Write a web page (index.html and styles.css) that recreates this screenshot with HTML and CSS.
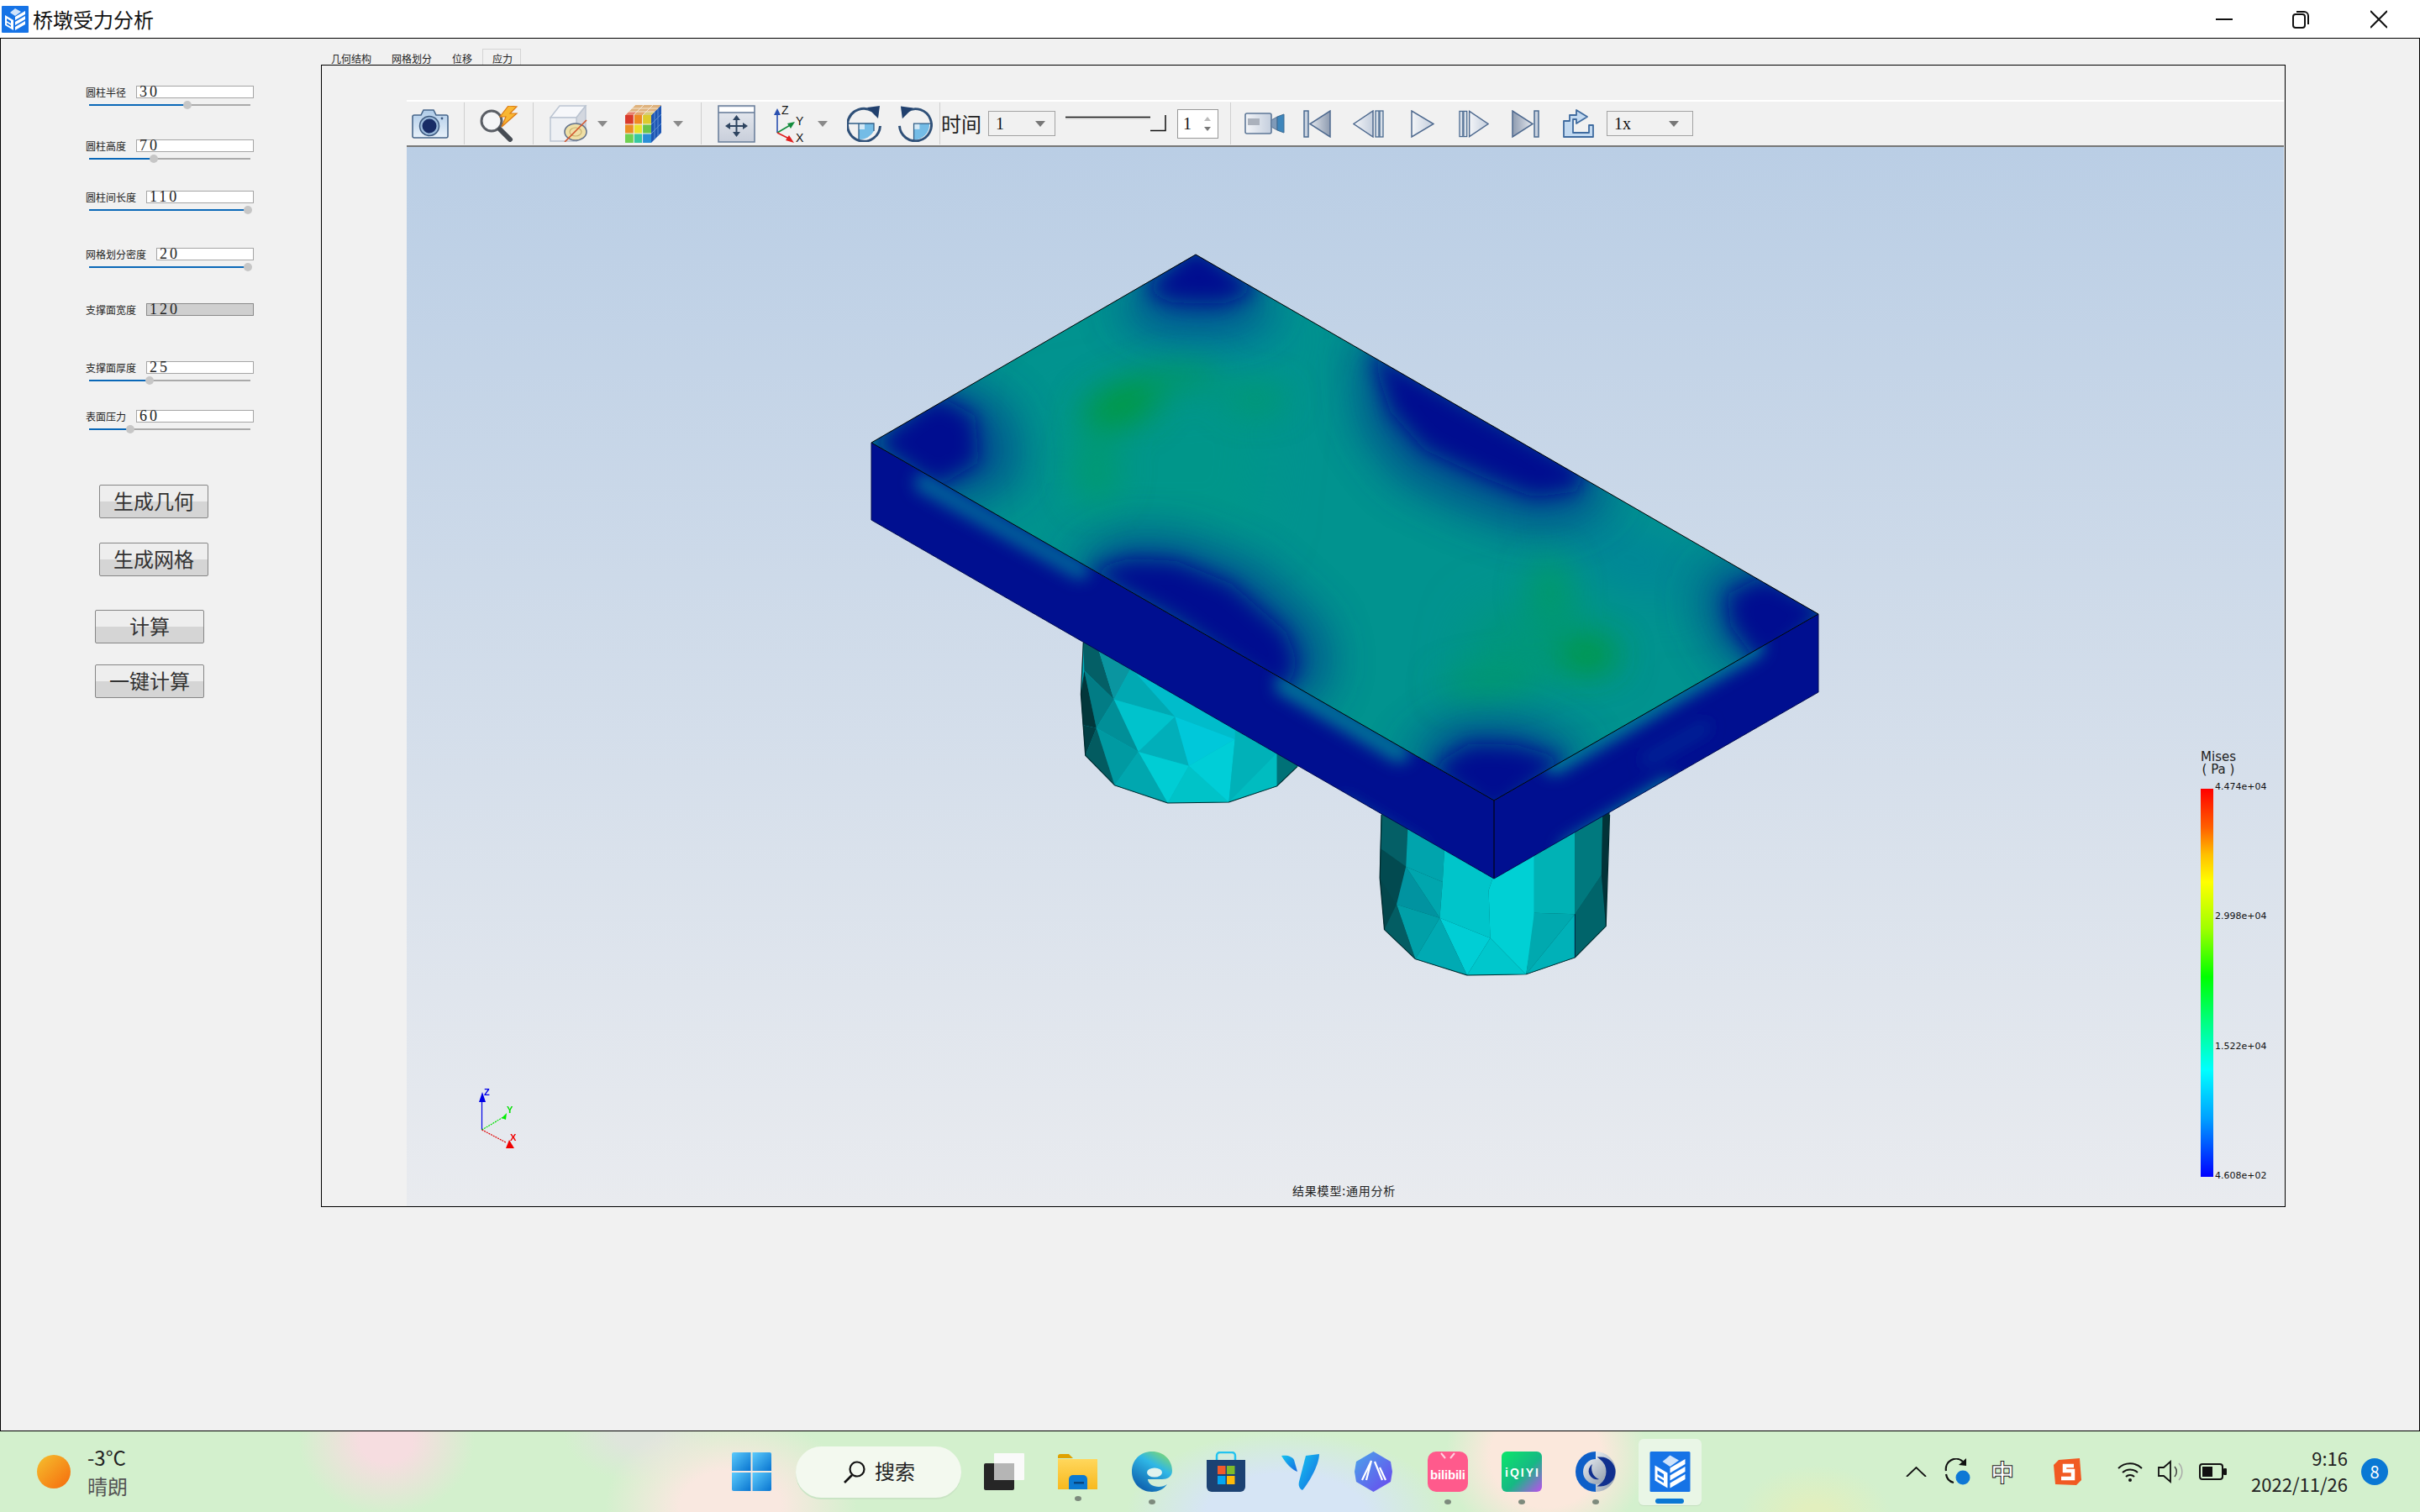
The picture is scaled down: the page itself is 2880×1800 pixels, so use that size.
FILE: index.html
```html
<!DOCTYPE html>
<html lang="zh">
<head>
<meta charset="utf-8">
<title>桥墩受力分析</title>
<link rel="stylesheet" href="styles.css">
</head>
<body>
<svg class="defs" width="0" height="0">
  <defs>
    <symbol id="appicon" viewBox="0 0 32 32">
      <rect width="32" height="32" rx="1" fill="#1673e6"/>
      <polygon points="16,3 23,7 16,12 10,8" fill="#cfe3fb"/>
      <polygon points="4,11 14,17 14,29 4,23" fill="#fff"/>
      <polygon points="6,15 11,18 11,21 6,18" fill="#1673e6"/>
      <polygon points="6,20 11,23 11,25 6,22" fill="#1673e6"/>
      <polygon points="16,13 28,6 28,10 16,17" fill="#fff"/>
      <polygon points="16,19 28,12 28,16 16,23" fill="#fff"/>
      <polygon points="16,25 28,18 28,22 16,29" fill="#fff"/>
    </symbol>
    <linearGradient id="glass" x1="0" y1="0" x2="0" y2="1"><stop offset="0" stop-color="#aecbe8"/><stop offset="1" stop-color="#e8f1fa"/></linearGradient>
    <linearGradient id="steel" x1="0" y1="0" x2="1" y2="0"><stop offset="0" stop-color="#e4e8ee"/><stop offset="1" stop-color="#8e9bb0"/></linearGradient>
    <linearGradient id="steelr" x1="1" y1="0" x2="0" y2="0"><stop offset="0" stop-color="#e4e8ee"/><stop offset="1" stop-color="#8e9bb0"/></linearGradient>
    <linearGradient id="pale" x1="0" y1="0" x2="1" y2="0"><stop offset="0" stop-color="#f3f5f8"/><stop offset="1" stop-color="#c4cedd"/></linearGradient>
    <linearGradient id="fitbg" x1="0" y1="0" x2="0" y2="1"><stop offset="0" stop-color="#e8ebf1"/><stop offset="1" stop-color="#c8ceda"/></linearGradient>
    <linearGradient id="winb" x1="0" y1="0" x2="1" y2="1"><stop offset="0" stop-color="#5ccbfc"/><stop offset="1" stop-color="#0874d0"/></linearGradient>
    <linearGradient id="sun" x1="0" y1="0" x2="1" y2="1"><stop offset="0" stop-color="#f6c02e"/><stop offset="1" stop-color="#f56a0c"/></linearGradient>
    <linearGradient id="edgeb" x1="0.8" y1="0" x2="0.2" y2="1"><stop offset="0" stop-color="#7fd870"/><stop offset="0.35" stop-color="#2fb7e6"/><stop offset="1" stop-color="#0b58a8"/></linearGradient>
    <linearGradient id="vbl" x1="0" y1="0" x2="1" y2="1"><stop offset="0" stop-color="#16c4f0"/><stop offset="1" stop-color="#1468e0"/></linearGradient>
    <linearGradient id="hexg" x1="0" y1="0" x2="1" y2="1"><stop offset="0" stop-color="#4aa6ea"/><stop offset="1" stop-color="#6b45ee"/></linearGradient>
    <linearGradient id="iq" x1="0" y1="0" x2="1" y2="1"><stop offset="0" stop-color="#0ce66a"/><stop offset="0.55" stop-color="#16b884"/><stop offset="1" stop-color="#c04cf0"/></linearGradient>
    <linearGradient id="folder" x1="0" y1="0" x2="0" y2="1"><stop offset="0" stop-color="#ffd75c"/><stop offset="1" stop-color="#f8b91e"/></linearGradient>
    <linearGradient id="silver" x1="0" y1="0" x2="1" y2="1"><stop offset="0" stop-color="#e8ecf0"/><stop offset="1" stop-color="#8a97a8"/></linearGradient>
  </defs>
</svg>

<div class="app">
  <header class="titlebar">
    <svg class="title-icon" width="32" height="32"><use href="#appicon"/></svg>
    <span class="title-text">桥墩受力分析</span>
    <div class="winctl">
      <svg class="ctl-min" width="20" height="20" viewBox="0 0 20 20"><path d="M0 10H20" stroke="#111" stroke-width="2"/></svg>
      <svg class="ctl-max" width="20" height="22" viewBox="0 0 20 22"><rect x="1" y="5" width="14" height="16" rx="3" fill="none" stroke="#111" stroke-width="2"/><path d="M5 2h9a5 5 0 015 5v10" fill="none" stroke="#111" stroke-width="2"/></svg>
      <svg class="ctl-close" width="20" height="22" viewBox="0 0 20 22"><path d="M0 1L20 21M20 1L0 21" stroke="#111" stroke-width="2"/></svg>
    </div>
  </header>

  <main class="window">
    <aside class="sidebar">
      <div class="param p1">
        <div class="field"><span class="flabel">圆柱半径</span><span class="finput">30</span></div>
        <div class="slider"><div class="track"><div class="fill" style="width:117px"></div></div><span class="thumb" style="left:112px"></span></div>
      </div>
      <div class="param p2">
        <div class="field"><span class="flabel">圆柱高度</span><span class="finput">70</span></div>
        <div class="slider"><div class="track"><div class="fill" style="width:77px"></div></div><span class="thumb" style="left:72px"></span></div>
      </div>
      <div class="param p3">
        <div class="field"><span class="flabel">圆柱间长度</span><span class="finput">110</span></div>
        <div class="slider"><div class="track"><div class="fill" style="width:189px"></div></div><span class="thumb" style="left:184px"></span></div>
      </div>
      <div class="param p4">
        <div class="field"><span class="flabel">网格划分密度</span><span class="finput">20</span></div>
        <div class="slider"><div class="track"><div class="fill" style="width:189px"></div></div><span class="thumb" style="left:184px"></span></div>
      </div>
      <div class="param p5">
        <div class="field"><span class="flabel">支撑面宽度</span><span class="finput disabled">120</span></div>
      </div>
      <div class="param p6">
        <div class="field"><span class="flabel">支撑面厚度</span><span class="finput">25</span></div>
        <div class="slider"><div class="track"><div class="fill" style="width:72px"></div></div><span class="thumb" style="left:67px"></span></div>
      </div>
      <div class="param p7">
        <div class="field"><span class="flabel">表面压力</span><span class="finput">60</span></div>
        <div class="slider"><div class="track"><div class="fill" style="width:49px"></div></div><span class="thumb" style="left:44px"></span></div>
      </div>
      <div class="btn b1">生成几何</div>
      <div class="btn b2">生成网格</div>
      <div class="btn b3">计算</div>
      <div class="btn b4">一键计算</div>
    </aside>

    <section class="workspace">
      <nav class="tabs">
        <span class="tab">几何结构</span>
        <span class="tab">网格划分</span>
        <span class="tab">位移</span>
        <span class="tab active">应力</span>
      </nav>
      <div class="pane">
        <div class="toolbar">
          <svg class="t-cam" width="44" height="37" viewBox="0 0 44 37">
            <path d="M3 8h8l3-6h12l3 6h12a2 2 0 012 2v23a2 2 0 01-2 2H3a2 2 0 01-2-2V10a2 2 0 012-2z" fill="url(#glass)" stroke="#47668a" stroke-width="1.6"/>
            <circle cx="21" cy="21" r="11.5" fill="#9dbcdc" stroke="#3d5a80" stroke-width="1.5"/>
            <circle cx="21" cy="21" r="8.5" fill="#182c66"/>
            <circle cx="36" cy="12" r="1.4" fill="#3d5a80"/>
          </svg>
          <span class="sep s1"></span>
          <svg class="t-mag" width="46" height="43" viewBox="0 0 46 43">
            <circle cx="14" cy="18" r="12" fill="#f5f6f8" stroke="#5b5f66" stroke-width="3"/>
            <path d="M24 28L36 40" stroke="#474c54" stroke-width="6" stroke-linecap="round"/>
            <polygon points="34,0 24,13 31,13 26,25 44,9 36,9 44,1" fill="#f9b733" stroke="#dc7a12" stroke-width="1.2"/>
          </svg>
          <span class="sep s2"></span>
          <svg class="t-cube" width="46" height="44" viewBox="0 0 46 44">
            <polygon points="1,15 12,1 43,1 32,15" fill="#f6f7fa" stroke="#bcc5d2" stroke-width="1.5"/>
            <polygon points="32,15 43,1 43,30 32,43" fill="#d3d7df" stroke="#bcc5d2" stroke-width="1.5"/>
            <rect x="1" y="15" width="31" height="28" fill="#eef0f4" stroke="#bcc5d2" stroke-width="1.5"/>
            <ellipse cx="31" cy="32" rx="13" ry="10" fill="#efdfa6" stroke="#65748c" stroke-width="1.6"/>
            <ellipse cx="31" cy="32" rx="7" ry="5" fill="none" stroke="#c9b26e" stroke-width="1.2"/>
            <path d="M18 44L44 18" stroke="#d2552c" stroke-width="1.6"/>
          </svg>
          <span class="drop d1"></span>
          <svg class="t-rubik" width="43" height="45" viewBox="0 0 43 45">
            <polygon points="31,12 43,0 43,33 31,45" fill="#1d56b4"/>
            <path d="M35 8V41M39 4V37M31 23L43 11M31 34L43 22" stroke="#5f8fd0" stroke-width="1"/>
            <polygon points="0,12 12,0 43,0 31,12" fill="#dfb27c"/>
            <polygon points="0,12 4,8 14,8 10,12" fill="#e8836e"/>
            <polygon points="10,12 14,8 25,8 21,12" fill="#e4a66c"/>
            <polygon points="21,12 25,8 35,8 31,12" fill="#d6cc78"/>
            <path d="M4 8H35M8 4H39M12 0L0 12M22 0L10 12M33 0L21 12" stroke="#f3e6d4" stroke-width="1"/>
            <rect y="12" width="10.3" height="11" fill="#d93a2b"/><rect x="10.3" y="12" width="10.3" height="11" fill="#ef8a21"/><rect x="20.6" y="12" width="10.4" height="11" fill="#dccb2d"/>
            <rect y="23" width="10.3" height="11" fill="#eb8f24"/><rect x="10.3" y="23" width="10.3" height="11" fill="#e9e22a"/><rect x="20.6" y="23" width="10.4" height="11" fill="#68c44a"/>
            <rect y="34" width="10.3" height="11" fill="#6ed152"/><rect x="10.3" y="34" width="10.3" height="11" fill="#37c9a0"/><rect x="20.6" y="34" width="10.4" height="11" fill="#2a8fd8"/>
            <path d="M10.3 12V45M20.6 12V45M0 23H31M0 34H31" stroke="#f2f2f2" stroke-width="1"/>
          </svg>
          <span class="drop d2"></span>
          <span class="sep s3"></span>
          <svg class="t-fit" width="45" height="45" viewBox="0 0 45 45">
            <rect x="1" y="1" width="43" height="43" fill="url(#fitbg)" stroke="#667b98" stroke-width="1.5"/>
            <rect x="2" y="3" width="41" height="5" fill="#fff"/>
            <path d="M1 9H44" stroke="#667b98" stroke-width="1.5"/>
            <path d="M22.5 14V36M11 25H34" stroke="#2e4460" stroke-width="2"/>
            <polygon points="22.5,12 18,18 27,18" fill="#2e4460"/><polygon points="22.5,38 18,32 27,32" fill="#2e4460"/>
            <polygon points="9,25 15,21 15,29" fill="#2e4460"/><polygon points="36,25 30,21 30,29" fill="#2e4460"/>
          </svg>
          <svg class="t-axes" width="37" height="47" viewBox="0 0 37 47">
            <path d="M4 34V10" stroke="#2a50b0" stroke-width="1.6"/><polygon points="4,5 0,13 8,13" fill="#2a50b0"/>
            <path d="M4 34L21 24" stroke="#128c3c" stroke-width="1.6"/><polygon points="25,21 16,23 20,29" fill="#128c3c"/>
            <path d="M4 34L20 42" stroke="#e02020" stroke-width="1.6"/><polygon points="24,46 14,43 18,37" fill="#e02020"/>
            <text x="9" y="12" class="axlabel">Z</text><text x="26" y="25" class="axlabel">Y</text><text x="26" y="45" class="axlabel">X</text>
          </svg>
          <span class="drop d3"></span>
          <svg class="t-rot" width="42" height="43" viewBox="0 0 42 43">
            <path d="M14 21H32V30A19 19 0 0 1 14 40Z" fill="#74bce6"/>
            <rect x="14" y="21" width="7" height="7" fill="#d4e9f6"/>
            <path d="M1 21H32V30M14 21V40" fill="none" stroke="#2f5d86" stroke-width="1.3"/>
            <path d="M30 6A19.500 19.500 0 1 0 39.500 24" fill="none" stroke="#2f5078" stroke-width="3"/>
            <polygon points="24,2 39,0 37,15" fill="#21406e"/>
          </svg>
          <svg class="t-rot2" width="41" height="43" viewBox="0 0 42 43">
            <path d="M19 21H38A19 19 0 0 1 19 41Z" fill="#74bce6"/>
            <rect x="19" y="21" width="7" height="7" fill="#d4e9f6"/>
            <path d="M40 21H19V41" fill="none" stroke="#2f5d86" stroke-width="1.3"/>
            <path d="M11 6A19.500 19.500 0 1 1 1.500 24" fill="none" stroke="#2f5078" stroke-width="3"/>
            <polygon points="18,2 3,0 5,15" fill="#21406e"/>
          </svg>
          <span class="sep s4"></span>
          <span class="time-label">时间</span>
          <div class="combo c-time"><span>1</span><i class="combo-arrow"></i></div>
          <svg class="t-range" width="120" height="20" viewBox="0 0 120 20"><path d="M0 2.500H101" stroke="#111" stroke-width="1.500"/><path d="M0 4H101" stroke="#bbb" stroke-width="1"/><path d="M101 18.500H119V0" fill="none" stroke="#111" stroke-width="1.500"/></svg>
          <div class="spin"><span>1</span><div class="spin-arrows"><i class="up"></i><i class="down"></i></div></div>
          <span class="sep s5"></span>
          <svg class="t-video" width="48" height="26" viewBox="0 0 48 26">
            <rect x="1" y="1" width="31" height="24" rx="2" fill="url(#pale)" stroke="#5d7797" stroke-width="1.600"/>
            <rect x="4" y="7" width="14" height="8" fill="#aab1bc"/>
            <polygon points="32,9 39,5 39,21 32,17" fill="#7f9ab8" stroke="#5d7797"/>
            <polygon points="39,5 47,2 47,24 39,21" fill="#3e86bb" stroke="#3c6a92"/>
          </svg>
          <svg class="t-first" width="33" height="33" viewBox="0 0 33 33"><rect x="1" y="1" width="5" height="31" fill="#c9d2df" stroke="#4a6a90" stroke-width="1.500"/><polygon points="32,1 32,32 8,16.500" fill="url(#steel)" stroke="#4f6a8f" stroke-width="1.500"/></svg>
          <svg class="t-prev" width="37" height="33" viewBox="0 0 37 33"><polygon points="24,1 24,32 1,16.500" fill="url(#pale)" stroke="#4f6a8f" stroke-width="1.500"/><rect x="27" y="1" width="4" height="31" fill="#d8dfe8" stroke="#4a6a90" stroke-width="1.300"/><rect x="32" y="1" width="4" height="31" fill="#d8dfe8" stroke="#4a6a90" stroke-width="1.300"/></svg>
          <svg class="t-play" width="28" height="33" viewBox="0 0 28 33"><polygon points="1,1 1,32 27,16.500" fill="url(#pale)" stroke="#4f6a8f" stroke-width="1.500"/></svg>
          <svg class="t-next" width="36" height="33" viewBox="0 0 37 33"><rect x="1" y="1" width="4" height="31" fill="#d8dfe8" stroke="#4a6a90" stroke-width="1.300"/><rect x="6" y="1" width="4" height="31" fill="#d8dfe8" stroke="#4a6a90" stroke-width="1.300"/><polygon points="13,1 13,32 36,16.500" fill="url(#pale)" stroke="#4f6a8f" stroke-width="1.500"/></svg>
          <svg class="t-last" width="33" height="33" viewBox="0 0 33 33"><polygon points="1,1 1,32 25,16.500" fill="url(#steelr)" stroke="#4f6a8f" stroke-width="1.500"/><rect x="27" y="1" width="5" height="31" fill="#c9d2df" stroke="#4a6a90" stroke-width="1.500"/></svg>
          <svg class="t-export" width="38" height="34" viewBox="0 0 38 34"><path d="M2 14H9V7H17V1L30 9L17 17V12H13V28H32V19H37V33H2Z" fill="#c2d9f0" stroke="#3f6b9f" stroke-width="1.800" stroke-linejoin="round"/></svg>
          <div class="combo c-speed"><span>1x</span><i class="combo-arrow"></i></div>
        </div>

        <div class="viewport">
          <svg class="model" width="2234" height="1261" viewBox="484 175 2234 1261">
            <defs>
              <clipPath id="clipTop"><polygon points="1423,303 2164,731 1778,953 1037,527"/></clipPath>
              <clipPath id="clipLeft"><polygon points="1037,527 1778,953 1778,1046 1037,619"/></clipPath>
              <clipPath id="clipRight"><polygon points="1778,953 2164,731 2164,824 1778,1046"/></clipPath>
              <filter id="b30" x="-40%" y="-40%" width="180%" height="180%"><feGaussianBlur stdDeviation="30"/></filter>
              <filter id="b26" x="-40%" y="-40%" width="180%" height="180%"><feGaussianBlur stdDeviation="26"/></filter>
              <filter id="b13" x="-40%" y="-40%" width="180%" height="180%"><feGaussianBlur stdDeviation="13"/></filter>
              <filter id="b20" x="-60%" y="-60%" width="220%" height="220%"><feGaussianBlur stdDeviation="20"/></filter>
              <filter id="b9" x="-40%" y="-40%" width="180%" height="180%"><feGaussianBlur stdDeviation="9"/></filter>
            </defs>

            <!-- left pier -->
            <g transform="translate(1220 740) scale(.4847 .3333)">
              <polygon fill="#00b4c2" points="143,50 300,150 690,470 668,518 618,588 500,645 350,648 220,585 148,478 137,260"/>
              <polygon fill="#045f66" points="143,55 178,90 218,278 145,175"/>
              <polygon fill="#0a95a0" points="178,90 260,165 218,278"/>
              <polygon fill="#00a9b3" points="260,165 368,340 218,278"/>
              <polygon fill="#00bccb" points="260,165 300,190 530,380 515,420 368,340"/>
              <polygon fill="#00c3cc" points="218,278 368,340 278,465"/>
              <polygon fill="#027c85" points="145,175 218,278 175,380"/>
              <polygon fill="#02373b" points="145,175 137,260 142,370 175,380"/>
              <polygon fill="#018f98" points="218,278 278,465 175,380"/>
              <polygon fill="#01afba" points="368,340 402,515 278,465"/>
              <polygon fill="#00c8da" points="368,340 515,420 402,515"/>
              <polygon fill="#009aa2" points="175,380 278,465 220,585"/>
              <polygon fill="#035b60" points="175,380 148,478 220,585"/>
              <polygon fill="#023f44" points="142,370 175,380 148,478"/>
              <polygon fill="#00cdd4" points="278,465 402,515 350,648"/>
              <polygon fill="#00a7af" points="278,465 350,648 220,585"/>
              <polygon fill="#00c3c8" points="402,515 500,645 350,648"/>
              <polygon fill="#00ced7" points="402,515 515,420 500,645"/>
              <polygon fill="#00b1b8" points="515,380 618,460 618,470 500,645 515,420"/>
              <polygon fill="#00bcc0" points="618,470 618,588 500,645"/>
              <polygon fill="#007177" points="618,460 690,510 668,518 618,588"/>
              <polyline class="pier-edge" points="143,75 137,260 148,478 220,585 350,648 500,645 618,588 668,518"/>
            </g>

            <!-- right pier -->
            <g transform="translate(1220 740) scale(.4847 .3333)">
              <polygon fill="#03555b" points="875,670 1152,880 1435,670 1430,880 1426,1088 1350,1200 1230,1260 1085,1263 958,1205 882,1100 871,915"/>
              <polygon fill="#045f66" points="875,670 940,725 935,875 872,810"/>
              <polygon fill="#024a50" points="872,810 935,875 912,1010 871,915"/>
              <polygon fill="#03474c" points="871,915 912,1010 882,1100"/>
              <polygon fill="#00a4ad" points="940,725 1030,800 1025,930 935,875"/>
              <polygon fill="#0193a0" points="935,875 1018,1058 912,1010"/>
              <polygon fill="#00a6ae" points="935,875 1025,930 1018,1058"/>
              <polygon fill="#00c5ca" points="1030,800 1152,900 1138,960 1142,1130 1018,1058 1025,930"/>
              <polygon fill="#00d0d4" points="1152,900 1250,820 1250,1080 1230,1260 1142,1130 1138,960"/>
              <polygon fill="#00ced5" points="1018,1058 1142,1130 1085,1263"/>
              <polygon fill="#00a0a8" points="912,1010 1018,1058 958,1205"/>
              <polygon fill="#035d63" points="912,1010 958,1205 882,1100"/>
              <polygon fill="#00aab3" points="1018,1058 1085,1263 958,1205"/>
              <polygon fill="#00c7cc" points="1142,1130 1230,1260 1085,1263"/>
              <polygon fill="#00b2b5" points="1250,820 1350,737 1350,1045 1250,1040"/>
              <polygon fill="#00a9af" points="1250,1040 1350,1045 1230,1260"/>
              <polygon fill="#00b1b8" points="1350,1045 1350,1200 1230,1260"/>
              <polygon fill="#00797e" points="1350,737 1418,682 1415,905 1350,1045"/>
              <polygon fill="#00646a" points="1350,1045 1415,905 1426,1088 1350,1200"/>
              <polygon fill="#023338" points="1418,682 1435,670 1430,880 1426,1088 1415,905"/>
              <polyline class="pier-edge" points="875,690 871,915 882,1100 958,1205 1085,1263 1230,1260 1350,1200 1426,1088 1435,690"/>
              <path d="M1350 1045V1200" stroke="#013" stroke-width="2"/>
            </g>

            <!-- slab: side faces -->
            <polygon points="1037,527 1778,953 1778,1046 1037,619" fill="#000f90"/>
            <polygon points="1778,953 2164,731 2164,824 1778,1046" fill="#000f90"/>
            <g clip-path="url(#clipLeft)">
              <g filter="url(#b9)" fill="none" stroke-linecap="round">
                <path d="M1100 575L1285 678" stroke="#00609a" stroke-width="24"/>
                <path d="M1530 815L1665 895" stroke="#007098" stroke-width="26"/>
                <path d="M1600 955L1690 1010" stroke="#00509c" stroke-width="12"/>
              </g>
            </g>
            <g clip-path="url(#clipRight)">
              <g filter="url(#b9)" fill="none" stroke-linecap="round">
                <path d="M1850 908L2085 770" stroke="#007898" stroke-width="28"/>
                <path d="M1870 1012L1985 940" stroke="#007898" stroke-width="28"/>
                <path d="M1960 905L2030 865" stroke="#00309a" stroke-width="10"/>
              </g>
            </g>

            <!-- slab: top face -->
            <polygon points="1423,303 2164,731 1778,953 1037,527" fill="#01938f"/>
            <g clip-path="url(#clipTop)">
              <g filter="url(#b30)">
                <polygon fill="#01968a" points="1250,480 1520,450 1500,640 1280,640"/>
                <polygon fill="#008c9c" points="1350,340 1560,400 1400,440"/>
                <polygon fill="#008598" points="1840,600 2020,650 2000,720 1880,680"/>
                <polygon fill="#01977a" points="1760,730 1900,710 1910,790 1740,820"/>
              </g>
              <g filter="url(#b26)" fill="#00408f" opacity=".75">
                <polygon points="1325,375 1423,280 1525,375 1470,398 1385,398"/>
                <polygon points="1030,527 1130,445 1205,490 1215,570 1130,610"/>
                <polygon points="1610,400 1925,575 1900,615 1830,635 1750,610 1665,570 1620,510"/>
                <polygon points="1270,670 1335,635 1405,638 1495,672 1575,745 1585,800 1550,850 1400,750"/>
                <polygon points="1670,900 1735,852 1815,855 1895,895 1778,975"/>
                <polygon points="2180,725 2075,655 2020,695 2030,750 2075,810"/>
              </g>
              <g filter="url(#b13)" fill="#000f90">
                <polygon points="1360,345 1423,290 1500,345 1455,362 1395,360"/>
                <polygon points="1037,527 1115,470 1160,495 1165,550 1115,580"/>
                <polygon points="1630,415 1890,560 1875,585 1825,592 1765,568 1695,535 1655,490"/>
                <polygon points="1290,680 1345,665 1400,668 1465,695 1530,752 1545,790 1525,830 1400,740"/>
                <polygon points="1700,915 1750,885 1805,887 1865,905 1778,975"/>
                <polygon points="2180,725 2100,685 2055,708 2060,745 2100,800"/>
              </g>
              <g filter="url(#b20)">
                <ellipse cx="1335" cy="482" rx="50" ry="24" fill="#009a3c" transform="rotate(-24 1335 482)"/>
                <ellipse cx="1410" cy="448" rx="45" ry="12" fill="#019a58"/>
                <ellipse cx="1495" cy="475" rx="36" ry="13" fill="#019a68"/>
                <ellipse cx="1305" cy="560" rx="26" ry="38" fill="#019a70"/>
                <ellipse cx="1890" cy="780" rx="36" ry="18" fill="#009a34"/>
                <ellipse cx="1845" cy="705" rx="22" ry="40" fill="#019a68"/>
                <ellipse cx="1775" cy="810" rx="62" ry="13" fill="#019a68" transform="rotate(-8 1775 810)"/>
              </g>
            </g>

            <polygon class="slab-edge" points="1423,303 2164,731 1778,953 1037,527"/>
            <path class="slab-line" d="M1778 953V1046"/>
            <polyline class="slab-out" points="1037,527 1037,619 1778,1046 2164,824 2164,731"/>

            <!-- triad -->
            <path d="M573.500 1345V1308" stroke="#0000e6" stroke-width="1.200"/>
            <polygon points="574,1300 570,1312 578,1312" fill="#0000e6"/>
            <path d="M573.500 1345L599 1330" stroke="#00e000" stroke-width="1.200" stroke-dasharray="2 1"/>
            <polygon points="603,1325 597,1331 602,1333" fill="#00ee00"/>
            <path d="M573.500 1345L602 1360" stroke="#e00000" stroke-width="1.200" stroke-dasharray="2 1"/>
            <polygon points="606,1357 602,1367 612,1367" fill="#f00000"/>
            <text x="576" y="1304" class="tri tz">Z</text>
            <text x="603" y="1325" class="tri ty">Y</text>
            <text x="607" y="1358" class="tri tx">X</text>
          </svg>

          <div class="legend">
            <div class="legend-title">Mises<br>( Pa )</div>
            <div class="legend-body">
              <div class="legend-bar"></div>
              <div class="legend-ticks"><span>4.474e+04</span><span>2.998e+04</span><span>1.522e+04</span><span>4.608e+02</span></div>
            </div>
          </div>
          <div class="model-type">结果模型:通用分析</div>
        </div>
      </div>
    </section>
  </main>

  <footer class="taskbar">
    <svg class="tb-sun" width="40" height="40" viewBox="0 0 40 40"><circle cx="20" cy="20" r="20" fill="url(#sun)"/></svg>
    <div class="weather"><span class="temp">-3°C</span><span class="sky">晴朗</span></div>

    <svg class="tb-win" width="47" height="46" viewBox="0 0 47 46">
      <path d="M2 0H22.500V22H0V2a2 2 0 012-2z" fill="url(#winb)"/><path d="M24.500 0H45a2 2 0 012 2V22H24.500z" fill="url(#winb)"/>
      <path d="M0 24H22.500V46H2a2 2 0 01-2-2z" fill="url(#winb)"/><path d="M24.500 24H47V44a2 2 0 01-2 2H24.500z" fill="url(#winb)"/>
    </svg>
    <div class="searchbox">
      <svg width="27" height="27" viewBox="0 0 27 27"><circle cx="17" cy="10" r="8.500" fill="none" stroke="#111" stroke-width="2.200"/><path d="M11 17L2 26" stroke="#111" stroke-width="2.600"/></svg>
      <span class="search-text">搜索</span>
    </div>
    <svg class="tb-task" width="48" height="44" viewBox="0 0 48 44">
      <rect x="0" y="12" width="36" height="32" rx="2" fill="#262626"/>
      <rect x="12" y="0" width="36" height="32" rx="1" fill="#fafafa"/>
      <rect x="12" y="12" width="24" height="20" fill="#b5b5b5"/>
    </svg>
    <div class="tb-item i-folder">
      <svg width="47" height="42" viewBox="0 0 47 42">
        <path d="M0 3a3 3 0 013-3h10l5 5h-18z" fill="#dfa100"/>
        <path d="M0 6h47v36H0z" fill="url(#folder)"/>
        <path d="M13 42V30a5 5 0 015-5h12a5 5 0 015 5v12z" fill="#0b7ad1"/>
        <rect x="19" y="33" width="12" height="2.500" fill="#06457e"/>
      </svg>
      <i class="dot"></i>
    </div>
    <div class="tb-item i-edge">
      <svg width="48" height="48" viewBox="0 0 48 48">
        <path d="M24 0C38 0 48 10 48 23C48 30 42 33 36 33H19C19 38 25 42 32 42C36 42 39 41 42 39C38 45 31 48 24 48C10 48 0 37 0 24C0 10 10 0 24 0Z" fill="url(#edgeb)"/>
        <ellipse cx="27" cy="25" rx="9" ry="5.500" fill="#e0f3ee"/>
      </svg>
      <i class="dot"></i>
    </div>
    <div class="tb-item i-store">
      <svg width="46" height="48" viewBox="0 0 46 48">
        <path d="M12 12V5a4 4 0 014-4h14a4 4 0 014 4v7" fill="none" stroke="#24c3ef" stroke-width="2.500"/>
        <path d="M0 10H46V42a6 6 0 01-6 6H6a6 6 0 01-6-6z" fill="#1c4273"/>
        <rect x="13" y="17" width="9.500" height="10" fill="#f15a2b"/><rect x="24" y="17" width="9.500" height="10" fill="#7fba2a"/>
        <rect x="13" y="29" width="9.500" height="10" fill="#05a6f0"/><rect x="24" y="29" width="9.500" height="10" fill="#ffba08"/>
      </svg>
    </div>
    <div class="tb-item i-v">
      <svg width="47" height="44" viewBox="0 0 47 44">
        <path d="M1 3C8 2 14 4 16 8L20 22C14 20 6 12 1 3Z" fill="url(#vbl)"/>
        <path d="M30 3L46 1C46 12 36 32 26 44C22 42 21 38 22 34Z" fill="url(#vbl)"/>
      </svg>
    </div>
    <div class="tb-item i-hex">
      <svg width="45" height="48" viewBox="0 0 45 48">
        <polygon points="22.500,0 43,12 45,24 43,36 22.500,48 2,36 0,24 2,12" fill="url(#hexg)"/>
        <path d="M9 34L20 11L14 34M24 12L33 34M30 19L37 34" fill="none" stroke="#fff" stroke-width="2.200"/>
      </svg>
    </div>
    <div class="tb-item i-bili">
      <svg width="48" height="48" viewBox="0 0 48 48">
        <rect width="48" height="48" rx="10" fill="#ff5a8c"/>
        <path d="M16 2L21 8M32 2L27 8" stroke="#ffd2e0" stroke-width="2"/>
        <text x="24" y="33" class="bili-text" textLength="42">bilibili</text>
      </svg>
      <i class="dot"></i>
    </div>
    <div class="tb-item i-iq">
      <svg width="48" height="48" viewBox="0 0 48 48">
        <rect width="48" height="48" rx="6" fill="url(#iq)"/>
        <text x="24" y="30" class="iq-text" textLength="40">iQIYI</text>
      </svg>
      <i class="dot"></i>
    </div>
    <div class="tb-item i-sw">
      <svg width="48" height="48" viewBox="0 0 48 48">
        <path d="M24 0a24 24 0 000 48z" fill="#0e5fc8"/>
        <path d="M24 0a24 24 0 010 48z" fill="url(#silver)"/>
        <circle cx="24" cy="24" r="15" fill="url(#silver)"/>
        <path d="M30 8A16 16 0 0130 40A20 20 0 0030 8z" fill="#11308e" stroke="#11308e" stroke-width="3"/>
        <path d="M20 15A10 10 0 0028 33A14 14 0 0120 15z" fill="#11308e"/>
      </svg>
      <i class="dot"></i>
    </div>
    <div class="tb-active">
      <svg width="49" height="48"><use href="#appicon"/></svg>
      <i class="tb-bar"></i>
    </div>

    <svg class="tr-up" width="25" height="12" viewBox="0 0 25 12"><path d="M1 12L12.500 1L24 12" fill="none" stroke="#111" stroke-width="1.800"/></svg>
    <svg class="tr-sync" width="32" height="32" viewBox="0 0 32 32">
      <path d="M3 15A12 12 0 0123 4" fill="none" stroke="#111" stroke-width="2.200"/><polygon points="27,0 27,9 18,8" fill="#111"/>
      <path d="M3 19A12 12 0 0012 29" fill="none" stroke="#111" stroke-width="2.200"/>
      <circle cx="23" cy="23" r="8.500" fill="#0e78d5"/>
    </svg>
    <span class="tr-ime">中</span>
    <svg class="tr-sogou" width="33" height="32" viewBox="0 0 33 32">
      <path d="M6 2L31 0L33 26L27 32L2 31L0 8z" fill="#f15a22"/>
      <path d="M24 9H13V15H23V24H9" fill="none" stroke="#fff" stroke-width="4.500"/>
    </svg>
    <svg class="tr-wifi" width="30" height="24" viewBox="0 0 30 24">
      <path d="M1 8A20 20 0 0129 8M6 13A13 13 0 0124 13M10 18A7 7 0 0120 18" fill="none" stroke="#111" stroke-width="2"/>
      <circle cx="15" cy="22" r="2" fill="#111"/>
    </svg>
    <svg class="tr-vol" width="32" height="28" viewBox="0 0 32 28">
      <path d="M1 9H7L15 2V26L7 19H1z" fill="none" stroke="#111" stroke-width="1.800"/>
      <path d="M20 8A9 9 0 0120 20" fill="none" stroke="#444" stroke-width="1.500"/>
      <path d="M25 4A15 15 0 0125 24" fill="none" stroke="#aaa" stroke-width="1.500"/>
    </svg>
    <svg class="tr-bat" width="33" height="20" viewBox="0 0 33 20">
      <rect x="1" y="1" width="27" height="18" rx="3" fill="none" stroke="#111" stroke-width="2"/>
      <rect x="4" y="4" width="12" height="12" fill="#111"/><rect x="29" y="6" width="4" height="8" rx="1" fill="#111"/>
    </svg>
    <div class="clock"><span>9:16</span><span>2022/11/26</span></div>
    <span class="notif">8</span>
  </footer>
</div>
</body>
</html>
```

FILE: styles.css
```css
* { box-sizing: border-box; }
html, body { margin: 0; padding: 0; }
body {
  width: 2880px;
  height: 1800px;
  overflow: hidden;
  background: #f1f1f1;
  font-family: "Noto Sans CJK SC", "Noto Sans", sans-serif;
  color: #111;
}
.defs { position: absolute; }
.app { display: flex; flex-direction: column; width: 2880px; height: 1800px; }

/* title bar */
.titlebar { height: 45px; flex: none; display: flex; align-items: center; background: #fff; }
.title-icon { margin: 0 5px 0 2px; }
.title-text { font-size: 24px; line-height: 30px; color: #111; }
.winctl { margin-left: auto; display: flex; align-items: center; padding-right: 39px; }
.ctl-max { margin-left: 71px; }
.ctl-close { margin-left: 73px; }

/* window */
.window {
  height: 1659px;
  flex: none;
  display: flex;
  background: #f1f1f1;
  border: 1px solid #000;
}
.sidebar { width: 381px; flex: none; padding-left: 101px; }

.param { width: 200px; }
.p1 { margin-top: 56px; }
.p2 { margin-top: 36px; }
.p3 { margin-top: 33px; }
.p4 { margin-top: 40px; }
.p5 { margin-top: 38px; }
.p6 { margin-top: 54px; }
.p7 { margin-top: 30px; }
.field { display: flex; align-items: center; height: 15px; }
.flabel { font-size: 12px; line-height: 15px; white-space: nowrap; color: #222; }
.finput {
  flex: 1;
  height: 15px;
  margin-left: 12px;
  padding-left: 3px;
  background: #fff;
  border: 1px solid #a5a5a5;
  font: 18px/13px "Liberation Serif", serif;
  letter-spacing: 3px;
  color: #222;
}
.finput.disabled { background: #cfcfcf; border-color: #8a8a8a; }
.slider { position: relative; width: 192px; height: 10px; margin: 3px 0 0 4px; }
.track { position: relative; height: 2px; top: 4px; background: #aaa; }
.fill { height: 2px; background: #0a68b8; }
.thumb { position: absolute; top: 0; width: 10px; height: 10px; border-radius: 50%; background: #c6c6c6; }

.btn {
  width: 130px;
  height: 40px;
  border: 1px solid #868686;
  border-radius: 2px;
  background: linear-gradient(#eeeeee 50%, #d5d5d5 50%);
  font-size: 24px;
  line-height: 36px;
  text-align: center;
  color: #333;
}
.b1 { margin: 61px 0 0 16px; }
.b2 { margin: 29px 0 0 16px; }
.b3 { margin: 40px 0 0 11px; }
.b4 { margin: 25px 0 0 11px; }

/* tabs and pane */
.workspace { flex: none; width: 2338px; }
.tabs { display: flex; height: 19px; margin-top: 12px; align-items: flex-end; }
.tab { padding: 0 12px; font-size: 12px; line-height: 14px; height: 19px; padding-top: 5px; color: #222; }
.tab.active { border: 1px solid #d4d4d4; border-bottom: none; padding: 4px 11px 0; width: 46px; white-space: nowrap; }
.pane {
  width: 2338px;
  height: 1360px;
  border: 1px solid #000;
  padding: 41px 1px 0 101px;
  display: flex;
  flex-direction: column;
}

/* toolbar */
.toolbar {
  height: 56px;
  flex: none;
  display: flex;
  align-items: center;
  background: #f1f1f1;
  border-top: 2px solid #fff;
  border-bottom: 2px solid #777;
}
.toolbar svg { flex: none; }
.sep { width: 1px; height: 50px; background: #cfcfcf; flex: none; }
.drop { width: 0; height: 0; flex: none; border-style: solid; border-width: 7px 6px 0; border-color: #8a8a8a transparent transparent; }
.t-cam { margin-left: 6px; }
.s1 { margin-left: 18px; }
.t-mag { margin-left: 18px; }
.s2 { margin-left: 17px; }
.t-cube { margin-left: 19px; }
.d1 { margin-left: 11px; }
.t-rubik { margin-left: 21px; }
.d2 { margin-left: 14px; }
.s3 { margin-left: 21px; }
.t-fit { margin-left: 19px; }
.t-axes { margin-left: 22px; }
.d3 { margin-left: 15px; }
.t-rot { margin-left: 23px; }
.t-rot2 { margin-left: 19px; }
.s4 { margin-left: 8px; }
.time-label { margin-left: 1px; font-size: 24px; line-height: 30px; width: 48px; flex: none; color: #222; }
.combo {
  display: flex;
  align-items: center;
  justify-content: space-between;
  height: 30px;
  padding: 0 11px 0 8px;
  border: 1px solid #a2a2a2;
  font: 20px/28px "Liberation Serif", serif;
  color: #111;
  flex: none;
}
.combo-arrow { width: 0; height: 0; border-style: solid; border-width: 7px 6px 0; border-color: #777 transparent transparent; }
.c-time { width: 80px; margin-left: 8px; }
.t-range { margin-left: 12px; }
.spin {
  width: 49px;
  height: 35px;
  margin-left: 13px;
  padding: 0 8px 0 6px;
  background: #fff;
  border: 1px solid #999;
  display: flex;
  align-items: center;
  justify-content: space-between;
  font: 20px/30px "Liberation Serif", serif;
  flex: none;
}
.spin-arrows { display: flex; flex-direction: column; gap: 7px; }
.spin-arrows i { display: block; width: 0; height: 0; border-style: solid; }
.spin-arrows .up { border-width: 0 4px 5px; border-color: transparent transparent #bbb; }
.spin-arrows .down { border-width: 5px 4px 0; border-color: #777 transparent transparent; }
.s5 { margin-left: 14px; }
.t-video { margin-left: 16px; }
.t-first { margin-left: 22px; }
.t-prev { margin-left: 26px; }
.t-play { margin-left: 32px; }
.t-next { margin-left: 29px; }
.t-last { margin-left: 27px; }
.t-export { margin-left: 27px; }
.c-speed { width: 103px; margin-left: 15px; padding-right: 16px; }
.axlabel { font: 14px "Liberation Sans", sans-serif; fill: #111; }

/* 3D viewport */
.viewport {
  position: relative;
  flex: 1;
  background: linear-gradient(#bacee5, #e9ebef);
  overflow: hidden;
}
.model { position: absolute; left: 0; top: 0; }
.pier-edge { fill: none; stroke: #01282c; stroke-width: 2.500; }
.slab-edge { fill: none; stroke: #000; stroke-width: 1; }
.slab-line { stroke: #000; stroke-width: 1; }
.slab-out { fill: none; stroke: #000a50; stroke-width: 1; }
.tri { font: bold 11px "Liberation Sans", sans-serif; }
.tz { fill: #0000e6; }
.ty { fill: #00e000; }
.tx { fill: #f00000; }

.legend { position: absolute; left: 2130px; top: 719px; width: 93px; }
.legend-title {
  width: 52px;
  font: 15px/15px "DejaVu Sans", sans-serif;
  text-align: center;
  color: #222;
}
.legend-body { display: flex; align-items: flex-start; margin-top: 6px; padding-left: 3px; }
.legend-bar {
  width: 15px;
  height: 462px;
  margin: 9px 2px 0 2px;
  flex: none;
  background: linear-gradient(#ff0000 0%, #ff6000 10%, #ffc000 17%, #ffff00 24%, #a0ff00 36%, #00ff00 48.500%, #00ff80 60%, #00ffff 72.500%, #00a0ff 85%, #0000ff 100%);
}
.legend-ticks {
  height: 477px;
  display: flex;
  flex-direction: column;
  justify-content: space-between;
  font: 11px/14px "DejaVu Sans", sans-serif;
  color: #111;
  white-space: nowrap;
}
.model-type { position: absolute; left: 1054px; top: 1234px; font-size: 14px; line-height: 16px; letter-spacing: .8px; color: #222; white-space: nowrap; }

/* taskbar */
.taskbar {
  flex: 1;
  display: flex;
  align-items: center;
  background:
    radial-gradient(ellipse 105px 90px at 460px 10px, #f6dde0 30%, rgba(246,221,224,0) 100%),
    radial-gradient(ellipse 150px 110px at 870px 90px, #f9e8e0 40%, rgba(249,232,224,0) 100%),
    radial-gradient(ellipse 90px 60px at 760px 0, #dfe5dc 30%, rgba(223,229,220,0) 100%),
    radial-gradient(ellipse 190px 100px at 1530px 100px, #d6e5f5 50%, rgba(214,229,245,0) 100%),
    radial-gradient(ellipse 120px 110px at 1840px 30px, #fbe8dc 55%, rgba(251,232,220,0) 100%),
    radial-gradient(ellipse 90px 60px at 2160px 100px, #e2efbe 20%, rgba(226,239,190,0) 100%),
    #d3f0cd;
}
.taskbar > svg, .taskbar > div, .taskbar > span { flex: none; }
.tb-sun { margin-left: 44px; }
.weather { margin-left: 20px; width: 48px; display: flex; flex-direction: column; font-size: 24px; line-height: 34px; white-space: nowrap; }
.temp { color: #222; }
.sky { color: #555; }
.tb-win { margin-left: 719px; }
.searchbox {
  width: 197px;
  height: 61px;
  margin-left: 29px;
  padding-left: 56px;
  display: flex;
  align-items: center;
  gap: 11px;
  border-radius: 31px;
  background: #f3f9ef;
  box-shadow: 0 2px 0 #c9e4c4;
  font-size: 24px;
  color: #222;
}
.search-text { line-height: 32px; margin-top: -2px; }
.tb-task { margin-left: 27px; }
.tb-item { position: relative; display: flex; }
.dot { position: absolute; left: 50%; bottom: -15px; width: 8px; height: 6px; margin-left: -4px; border-radius: 50%; background: #7d8a7d; }
.i-folder { margin-left: 40px; }
.i-folder .dot { bottom: -14px; }
.i-edge { margin-left: 41px; }
.i-store { margin-left: 41px; }
.i-v { margin-left: 42px; }
.i-hex { margin-left: 41px; }
.i-bili { margin-left: 42px; }
.i-iq { margin-left: 40px; }
.i-sw { margin-left: 40px; }
.bili-text { font: bold 15px "Liberation Sans", sans-serif; fill: #fff; text-anchor: middle; }
.iq-text { font: bold 14px "Liberation Sans", sans-serif; fill: #fff; text-anchor: middle; }
.tb-active {
  position: relative;
  width: 75px;
  height: 79px;
  margin-left: 27px;
  border-radius: 6px;
  background: #e9f6e6;
  box-shadow: 0 1px 0 #c3dfbe;
  display: flex;
  justify-content: center;
  align-items: center;
}
.tb-bar { position: absolute; left: 20px; bottom: 2px; width: 34px; height: 6px; border-radius: 3px; background: #0a78d4; }
.tr-up { margin-left: 243px; }
.tr-sync { margin-left: 20px; }
.tr-ime { margin-left: 23px; width: 30px; text-align: center; font-size: 28px; line-height: 34px; font-weight: 700; color: #fff; -webkit-text-stroke: 1px #222; }
.tr-sogou { margin-left: 46px; }
.tr-wifi { margin-left: 43px; }
.tr-vol { margin-left: 18px; }
.tr-bat { margin-left: 17px; }
.clock { width: 144px; display: flex; flex-direction: column; align-items: flex-end; font-size: 22px; line-height: 31px; color: #222; margin-top: -2px; }
.notif { width: 32px; height: 32px; margin-left: 16px; border-radius: 50%; background: #0a78d4; color: #fff; font-size: 20px; line-height: 32px; text-align: center; }
```
